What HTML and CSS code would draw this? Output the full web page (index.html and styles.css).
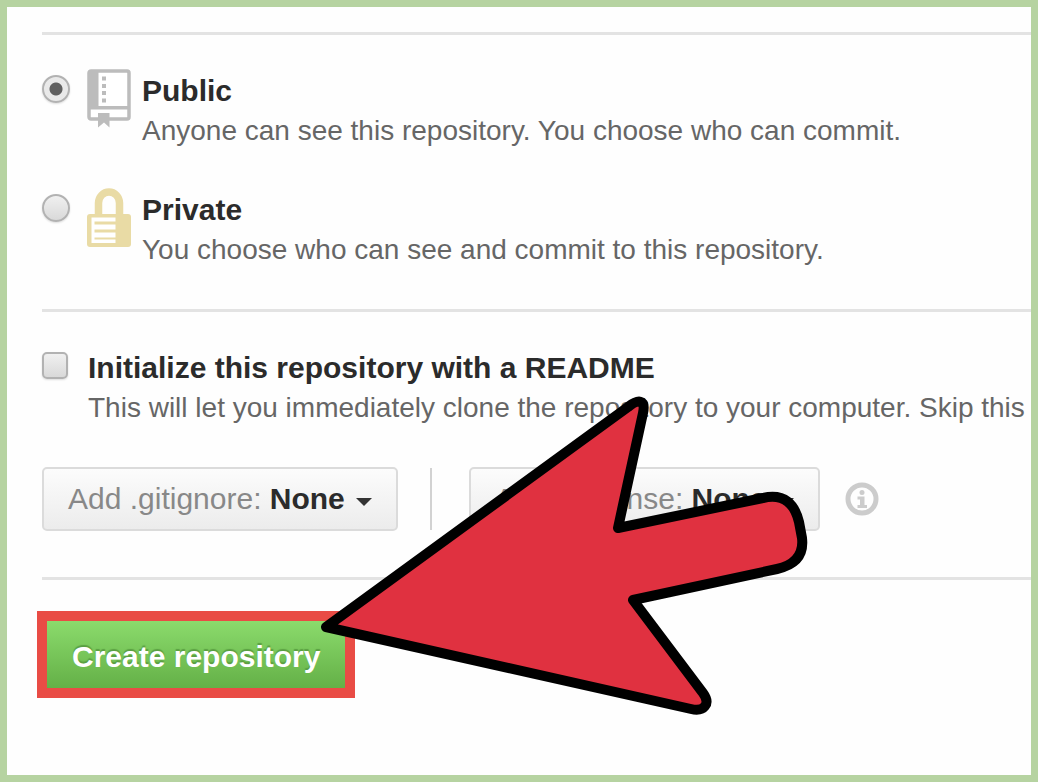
FILE: index.html
```html
<!DOCTYPE html>
<html lang="en">
<head>
<meta charset="utf-8">
<title>Create repository</title>
<link rel="stylesheet" href="styles.css">
</head>
<body>
<form class="page">
  <div class="section visibility">
    <div class="option">
      <input class="radio" type="radio" name="visibility" id="public" checked>
      <svg class="icon" viewBox="0 0 44 60" aria-hidden="true">
        <rect x="2" y="2" width="40" height="48" rx="2" fill="#fff" stroke="#bcbcbc" stroke-width="3.500"/>
        <path d="M1 2h10.500v37H1zM2 37h40v3.500H2z" fill="#bcbcbc"/>
        <path d="M15 7.500h4v4h-4zM15 15h4v4h-4zM15 22h4v4h-4zM15 29.500h4v4h-4zM11 44h11.500v14.500l-5.500-5L11 58.500z" fill="#bcbcbc"/>
      </svg>
      <label class="text" for="public"><strong class="title">Public</strong><span class="note">Anyone can see this repository. You choose who can commit.</span></label>
    </div>
    <div class="option">
      <input class="radio" type="radio" name="visibility" id="private">
      <svg class="icon" viewBox="0 0 44 60" aria-hidden="true">
        <path d="M11.500 28V15a10.500 11 0 0 1 21 0v13" fill="none" stroke="#e9dba5" stroke-width="7.500"/>
        <rect x="0" y="26" width="44" height="33" rx="3" fill="#e9dba5"/>
        <path d="M4.500 29.500h24v4H7.500v3h21v5h-21v3h21v5h-21v2h21V55h-24z" fill="#fff"/>
      </svg>
      <label class="text" for="private"><strong class="title">Private</strong><span class="note">You choose who can see and commit to this repository.</span></label>
    </div>
  </div>
  <div class="section setup">
    <div class="option">
      <input class="checkbox" type="checkbox" id="readme">
      <label class="text" for="readme"><strong class="title">Initialize this repository with a README</strong><span class="note">This will let you immediately clone the repository to your computer. Skip this</span></label>
    </div>
    <div class="menus">
      <button class="menu" type="button">Add .gitignore: <strong>None</strong><span class="caret"></span></button>
      <span class="divider"></span>
      <button class="menu" type="button">Add a license: <strong>None</strong><span class="caret"></span></button>
      <svg class="info" viewBox="0 0 34 34" role="img" aria-label="Information">
        <circle cx="17" cy="17" r="14" fill="none" stroke="#ccc" stroke-width="5"/>
        <circle cx="17" cy="10.500" r="2.500" fill="#ccc"/>
        <path d="M12.500 14.500h7V23H22v3h-9.500v-3H15v-5.500h-2.500z" fill="#ccc"/>
      </svg>
    </div>
  </div>
  <div class="section submit">
    <button class="create" type="submit">Create repository</button>
  </div>
  <svg class="pointer" viewBox="0 0 490 325" aria-hidden="true">
    <path d="M6 232 L308 12 C318 4 326 4 323 18 L298 133 L443 103 C465 98 475 110 479 127 L482 143 C484 160 475 170 457 174 L313 205 L383 298 C391 309 384 317 371 314 Z" fill="#e03140" stroke="#000" stroke-width="10" stroke-linejoin="round"/>
  </svg>
</form>
</body>
</html>
```
FILE: styles.css
```css
* { box-sizing: border-box; }

body {
  margin: 0;
  background: #fefefe;
  color: #666;
  font-family: "Liberation Sans", Arial, sans-serif;
  font-size: 30px;
  line-height: 40px;
}

.page {
  position: relative;
  min-height: 100vh;
  padding: 25px 0 0 35px;
  border: 7px solid #b6d3a1;
  overflow: hidden;
}

.section { border-top: 3px solid #e3e3e3; }

.visibility {
  display: flex;
  flex-direction: column;
  gap: 39px;
  padding: 36px 0 39px;
}

.setup { padding: 36px 0 46px; }
.submit { padding-top: 31px; }

.option {
  display: flex;
  align-items: flex-start;
}

.text { white-space: nowrap; }
.title, .note { display: block; }
.note { font-size: 28px; }
.title, .menu strong { color: #2b2b2b; }

.radio, .checkbox {
  appearance: none;
  flex: none;
  margin: 4px 18px 0 0;
  width: 28px;
  height: 28px;
  border: 2px solid #b2b2b2;
  background: linear-gradient(#f0f0f0, #d9d9d9);
  box-shadow: 0 1px 2px #ddd;
}

.radio { border-radius: 50%; }

.radio:checked {
  background: radial-gradient(circle, #606060 6px, #e9e9e9 7px);
}

.checkbox {
  margin-right: 20px;
  width: 26px;
  height: 27px;
  border-radius: 5px;
}

.icon {
  flex: none;
  width: 44px;
  height: 60px;
  margin: -2px 11px 0 -1px;
}

.menus {
  display: flex;
  align-items: center;
  margin-top: 39px;
}

.menu {
  height: 64px;
  padding: 0 24px;
  border: 2px solid #dbdbdb;
  border-radius: 5px;
  background: linear-gradient(#fcfcfc, #ececec);
  color: #888;
  font: inherit;
  white-space: nowrap;
}

.caret {
  display: inline-block;
  margin-left: 11px;
  border: 8px solid transparent;
  border-top-color: #333;
  border-bottom: 0;
  vertical-align: 3px;
}

.divider {
  width: 2px;
  height: 62px;
  margin: 0 37px 0 32px;
  background: #d2d2d2;
}

.info {
  width: 34px;
  height: 34px;
  margin-left: 25px;
}

.create {
  display: block;
  height: 87px;
  margin-left: -5px;
  padding: 4px 25px 0;
  border: 10px solid #e94c45;
  background: linear-gradient(#8bdb6c, #64b047);
  color: #fff;
  font: inherit;
  font-weight: bold;
  text-shadow: 0 -2px 1px #5a9f42;
}

/* Arrow laid over the form, pointing at the submit button */
.pointer {
  position: absolute;
  left: 313px;
  top: 388px;
  width: 490px;
  height: 325px;
}
```
